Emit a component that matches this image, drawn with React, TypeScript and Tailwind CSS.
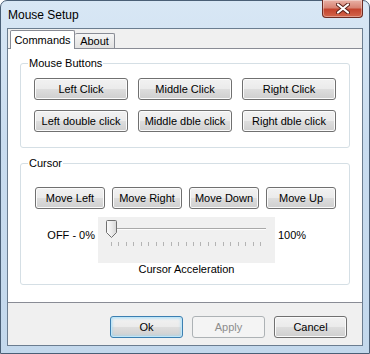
import React from "react";

const btnBase =
  "h-[22px] flex items-center justify-center rounded-[3px] border text-[11px] leading-none";
const btnNormal =
  "border-[#707070] bg-[linear-gradient(to_bottom,#f2f2f2_0%,#ebebeb_48%,#dddddd_52%,#cfcfcf_100%)] shadow-[inset_0_0_0_1px_#fbfbfb] text-black";

function Btn({ children, className = "" }: { children: React.ReactNode; className?: string }) {
  return <div className={`${btnBase} ${btnNormal} ${className}`}>{children}</div>;
}

function GroupBox({
  label,
  className = "",
  children,
}: {
  label: string;
  className?: string;
  children: React.ReactNode;
}) {
  return (
    <div className={`relative rounded-[3px] border border-[#d5dfe5] ${className}`}>
      <span className="absolute -top-[7px] left-[7px] bg-white px-[1px] text-[11px] leading-[13px] text-black">
        {label}
      </span>
      {children}
    </div>
  );
}

function Slider() {
  const ticks = [];
  for (let i = 0; i <= 20; i++) {
    const x = Math.round(13 + i * 7.45) + 0.5;
    ticks.push(<line key={i} x1={x} y1={25} x2={x} y2={29} stroke="#b4b4b4" strokeWidth={1} />);
  }
  return (
    <div className="w-[177px] h-[46px] bg-[#f0f0f0]">
      <svg width="177" height="46" className="block">
        <defs>
          <linearGradient id="thumbg" x1="0" y1="0" x2="1" y2="0">
            <stop offset="0" stopColor="#fbfbfb" />
            <stop offset="0.5" stopColor="#ececec" />
            <stop offset="1" stopColor="#d6d6d6" />
          </linearGradient>
        </defs>
        <line x1="10" y1="11.5" x2="168" y2="11.5" stroke="#a9a9a9" />
        <line x1="10" y1="12.5" x2="168" y2="12.5" stroke="#fdfdfd" />
        {ticks}
        <path
          d="M9.5 3.5 H17.5 Q18.5 3.5 18.5 4.5 V15.5 L13.5 20.5 L8.5 15.5 V4.5 Q8.5 3.5 9.5 3.5 Z"
          fill="url(#thumbg)"
          stroke="#707070"
        />
      </svg>
    </div>
  );
}

export default function App() {
  return (
    <div className="relative w-[370px] h-[354px] overflow-hidden bg-white font-['Liberation_Sans',Arial,sans-serif]">
      <div className="flex h-full w-full flex-col rounded-t-[7px] border border-[#4a5f76] bg-[linear-gradient(to_bottom,#d8e7f5_0%,#c9dcef_40%,#c3d8ec_100%)] px-[6px] pb-[7px]">
        {/* Title bar */}
        <div className="flex h-[27px] items-center pl-px">
          <span className="text-[12px] leading-none text-black">Mouse Setup</span>
        </div>
        {/* Client area */}
        <div className="flex flex-1 flex-col border border-[#6b7d90] bg-[#f0f0f0]">
          {/* Tab strip */}
          <div className="flex h-[19px] items-end pl-[2px]">
            <div className="relative z-10 -mb-px flex h-[19px] w-[65px] items-center justify-center rounded-t-[2px] border border-b-0 border-[#898c95] bg-white text-[11px] leading-none text-black">
              Commands
            </div>
            <div className="flex h-[15px] w-[40px] items-center justify-center rounded-t-[2px] border border-b-0 border-l-0 border-[#898c95] bg-[linear-gradient(to_bottom,#f5f5f5,#e1e1e1)] text-[11px] leading-none text-black">
              About
            </div>
          </div>
          {/* Tab panel */}
          <div className="flex h-[255px] flex-col border-y border-[#898c95] bg-white px-[12px] pt-[14px]">
            <GroupBox label="Mouse Buttons" className="h-[85px]">
              <div className="grid grid-cols-[94px_94px_94px] gap-x-[10px] gap-y-[10px] pl-[13px] pt-[14px]">
                <Btn>Left Click</Btn>
                <Btn>Middle Click</Btn>
                <Btn>Right Click</Btn>
                <Btn>Left double click</Btn>
                <Btn>Middle dble click</Btn>
                <Btn>Right dble click</Btn>
              </div>
            </GroupBox>
            <GroupBox label="Cursor" className="mt-[15px] h-[122px]">
              <div className="flex gap-[7px] pl-[14px] pt-[23px]">
                <Btn className="w-[70px]">Move Left</Btn>
                <Btn className="w-[70px]">Move Right</Btn>
                <Btn className="w-[70px]">Move Down</Btn>
                <Btn className="w-[70px]">Move Up</Btn>
              </div>
              <div className="mt-[8px] flex">
                <div className="w-[77px] pr-[3px] pt-[12px] text-right text-[11px] leading-[13px] text-black">
                  OFF - 0%
                </div>
                <div className="flex flex-col items-center">
                  <Slider />
                  <div className="text-[11px] leading-[13px] text-black">Cursor Acceleration</div>
                </div>
                <div className="pl-[3px] pt-[12px] text-[11px] leading-[13px] text-black">100%</div>
              </div>
            </GroupBox>
          </div>
          {/* Bottom buttons */}
          <div className="flex justify-end gap-[9px] pr-[15px] pt-[13px]">
            <div
              className={`${btnBase} w-[73px] border-[#3c7fb1] bg-[linear-gradient(to_bottom,#f2f2f2_0%,#ebebeb_48%,#dddddd_52%,#cfcfcf_100%)] shadow-[inset_0_0_0_1px_#bfe6f8,inset_0_0_3px_1px_#9ed8f3] text-black`}
            >
              Ok
            </div>
            <div className={`${btnBase} w-[73px] border-[#adb2b5] bg-[#f4f4f4] text-[#8d8d8d]`}>Apply</div>
            <Btn className="w-[73px]">Cancel</Btn>
          </div>
        </div>
      </div>
      {/* Close button */}
      <div className="absolute right-[7px] top-0 flex h-[18px] w-[41px] items-center justify-center rounded-b-[4px] border border-t-0 border-[#6e2b22] bg-[linear-gradient(to_bottom,#e9b1a6_0%,#d88474_45%,#c4442e_55%,#d3654b_100%)] shadow-[inset_0_0_0_1px_rgba(255,255,255,0.35)]">
        <svg width="14" height="11" viewBox="0 0 14 11">
          <path d="M2 1.5 L12 9.5 M12 1.5 L2 9.5" stroke="#5a2018" strokeWidth="4" strokeLinecap="round" />
          <path d="M2 1.5 L12 9.5 M12 1.5 L2 9.5" stroke="#ffffff" strokeWidth="2.2" strokeLinecap="round" />
        </svg>
      </div>
    </div>
  );
}
